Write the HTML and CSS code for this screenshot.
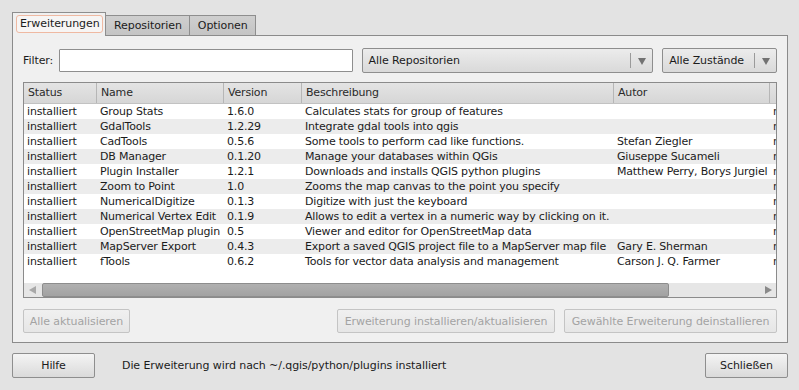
FILE: index.html
```html
<!DOCTYPE html>
<html>
<head>
<meta charset="utf-8">
<link rel="stylesheet" href="styles.css">
</head>
<body>
<div class="dialog">
  <div class="tabbar">
    <div class="tab active"><span class="tab-focus">Erweiterungen</span></div>
    <div class="tab">Repositorien</div>
    <div class="tab">Optionen</div>
  </div>
  <div class="panel">
    <div class="filter-row">
      <label class="filter-label">Filter:</label>
      <div class="input"></div>
      <div class="combo combo-repo"><span class="combo-text">Alle Repositorien</span><span class="combo-sep"></span><span class="combo-arrow"></span></div>
      <div class="combo combo-state"><span class="combo-text">Alle Zustände</span><span class="combo-sep"></span><span class="combo-arrow"></span></div>
    </div>
    <div class="table">
      <div class="thead row">
        <div class="th">Status</div>
        <div class="th">Name</div>
        <div class="th">Version</div>
        <div class="th">Beschreibung</div>
        <div class="th">Autor</div>
        <div class="th last"></div>
      </div>
      <div class="tbody">
        <div class="row"><div class="td">installiert</div><div class="td">Group Stats</div><div class="td">1.6.0</div><div class="td">Calculates stats for group of features</div><div class="td"></div><div class="td last">r</div></div>
        <div class="row alt"><div class="td">installiert</div><div class="td">GdalTools</div><div class="td">1.2.29</div><div class="td">Integrate gdal tools into qgis</div><div class="td"></div><div class="td last">r</div></div>
        <div class="row"><div class="td">installiert</div><div class="td">CadTools</div><div class="td">0.5.6</div><div class="td">Some tools to perform cad like functions.</div><div class="td">Stefan Ziegler</div><div class="td last">r</div></div>
        <div class="row alt"><div class="td">installiert</div><div class="td">DB Manager</div><div class="td">0.1.20</div><div class="td">Manage your databases within QGis</div><div class="td">Giuseppe Sucameli</div><div class="td last">r</div></div>
        <div class="row"><div class="td">installiert</div><div class="td">Plugin Installer</div><div class="td">1.2.1</div><div class="td">Downloads and installs QGIS python plugins</div><div class="td">Matthew Perry, Borys Jurgiel</div><div class="td last">r</div></div>
        <div class="row alt"><div class="td">installiert</div><div class="td">Zoom to Point</div><div class="td">1.0</div><div class="td">Zooms the map canvas to the point you specify</div><div class="td"></div><div class="td last">r</div></div>
        <div class="row"><div class="td">installiert</div><div class="td">NumericalDigitize</div><div class="td">0.1.3</div><div class="td">Digitize with just the keyboard</div><div class="td"></div><div class="td last">r</div></div>
        <div class="row alt"><div class="td">installiert</div><div class="td">Numerical Vertex Edit</div><div class="td">0.1.9</div><div class="td">Allows to edit a vertex in a numeric way by clicking on it.</div><div class="td"></div><div class="td last">r</div></div>
        <div class="row"><div class="td">installiert</div><div class="td">OpenStreetMap plugin</div><div class="td">0.5</div><div class="td">Viewer and editor for OpenStreetMap data</div><div class="td"></div><div class="td last">r</div></div>
        <div class="row alt"><div class="td">installiert</div><div class="td">MapServer Export</div><div class="td">0.4.3</div><div class="td">Export a saved QGIS project file to a MapServer map file</div><div class="td">Gary E. Sherman</div><div class="td last">r</div></div>
        <div class="row"><div class="td">installiert</div><div class="td">fTools</div><div class="td">0.6.2</div><div class="td">Tools for vector data analysis and management</div><div class="td">Carson J. Q. Farmer</div><div class="td last">r</div></div>
      </div>
      <div class="hscroll">
        <span class="sarrow left"></span>
        <div class="strack"><div class="shandle"></div></div>
        <span class="sarrow right"></span>
      </div>
    </div>
    <div class="button-row">
      <div class="btn disabled btn-all">Alle aktualisieren</div>
      <div class="spacer"></div>
      <div class="btn disabled btn-install">Erweiterung installieren/aktualisieren</div>
      <div class="btn disabled btn-remove">Gewählte Erweiterung deinstallieren</div>
    </div>
  </div>
  <div class="footer">
    <div class="btn btn-help">Hilfe</div>
    <div class="footer-text">Die Erweiterung wird nach ~/.qgis/python/plugins installiert</div>
    <div class="btn btn-close">Schließen</div>
  </div>
</div>
</body>
</html>
```

FILE: styles.css
```css
html, body {
  margin: 0;
  padding: 0;
  background: #e3e3e3;
  width: 799px;
  height: 390px;
  overflow: hidden;
}
body {
  font-family: "DejaVu Sans", sans-serif;
  font-size: 11px;
  letter-spacing: -0.08px;
  color: #1b1b1b;
}
.dialog {
  padding: 12px 11px 0 12px;
}
.tabbar {
  display: flex;
  align-items: flex-end;
  height: 23px;
}
.tab {
  height: 20px;
  box-sizing: border-box;
  border: 1px solid #8e8e8e;
  border-bottom: none;
  background: linear-gradient(#cfcfcf, #c4c4c4);
  padding: 0 7px 0 8px;
  line-height: 19px;
  border-left: none;
}
.tab.active {
  height: 24px;
  margin-bottom: -1px;
  background: #f0f0f0;
  border-left: 1px solid #8e8e8e;
  padding: 2px 2px 0 3px;
  position: relative;
  z-index: 1;
}
.tab-focus {
  display: block;
  height: 18px;
  box-sizing: border-box;
  border: 1px solid #efb9a2;
  border-radius: 3px;
  background: #f7f5f4;
  padding: 0 3px;
  line-height: 16px;
  width: 87px;
}
.panel {
  width: 776px;
  height: 308px;
  box-sizing: border-box;
  border: 1px solid #8b8b8b;
  background: #f0f0f0;
  padding: 12px 10px 0 10px;
}
.filter-row {
  display: flex;
  align-items: center;
  height: 25px;
}
.filter-label {
  width: 36px;
}
.input {
  width: 294px;
  height: 23px;
  box-sizing: border-box;
  border: 1px solid #8e8e8e;
  background: #ffffff;
  border-radius: 1px;
  margin-right: 9px;
}
.combo {
  height: 25px;
  box-sizing: border-box;
  border: 1px solid #8e8e8e;
  border-radius: 2px;
  background: linear-gradient(#ececec, #d9d9d9);
  display: flex;
  align-items: center;
  padding-left: 6px;
}
.combo-repo {
  width: 292px;
  margin-right: 9px;
}
.combo-state {
  width: 115px;
}
.combo-text {
  flex: 1;
}
.combo-sep {
  width: 1px;
  height: 15px;
  background: #9a9a9a;
}
.combo-arrow {
  width: 0;
  height: 0;
  border-left: 4px solid transparent;
  border-right: 4px solid transparent;
  border-top: 7px solid #727272;
  margin: 2px 6px 0 7px;
}
.table {
  margin-top: 9px;
  width: 754px;
  height: 216px;
  box-sizing: border-box;
  border: 1px solid #8b8b8b;
  background: #ffffff;
  display: flex;
  flex-direction: column;
  letter-spacing: -0.18px;
}
.row {
  display: grid;
  grid-template-columns: 73px 127px 78px 312px 156px 6px;
  height: 15px;
  line-height: 15px;
  white-space: nowrap;
}
.row.alt {
  background: #ececec;
}
.thead {
  height: 21px;
  line-height: 20px;
  box-sizing: border-box;
  background: linear-gradient(#e4e4e4, #d6d6d6);
  border-bottom: 1px solid #c2c2c2;
  color: #2a2a2a;
}
.th {
  padding-left: 4px;
  border-right: 1px solid #b6b6b6;
  overflow: hidden;
}
.th.last {
  border-right: none;
}
.td {
  padding-left: 3px;
  overflow: hidden;
}
.td.last {
  padding-left: 3px;
  color: #2a2a2a;
}
.tbody {
  height: 179px;
  box-sizing: border-box;
}
.hscroll {
  height: 14px;
  background: #e6e6e6;
  display: flex;
  align-items: center;
}
.sarrow {
  width: 0;
  height: 0;
  border-top: 4px solid transparent;
  border-bottom: 4px solid transparent;
}
.sarrow.left {
  border-right: 7px solid #a8a8a8;
  margin: 0 6px 0 5px;
}
.sarrow.right {
  border-left: 7px solid #8a8a8a;
  margin: 0 4px 0 6px;
}
.strack {
  flex: 1;
  height: 14px;
  display: flex;
}
.shandle {
  width: 627px;
  height: 14px;
  box-sizing: border-box;
  border: 1px solid #8d8d8d;
  border-radius: 2px;
  background: linear-gradient(#b0b0b0, #a2a2a2);
}
.button-row {
  display: flex;
  margin-top: 11px;
  height: 24px;
}
.spacer {
  flex: 1;
}
.btn {
  box-sizing: border-box;
  border: 1px solid #8e8e8e;
  border-radius: 2px;
  background: linear-gradient(#f4f4f4, #dadada);
  display: flex;
  align-items: center;
  justify-content: center;
}
.btn.disabled {
  border-color: #c4c4c4;
  background: linear-gradient(#f0f0f0, #e6e6e6);
  color: #a3a3a3;
}
.btn-all {
  width: 107px;
}
.btn-install {
  width: 218px;
}
.btn-remove {
  width: 213px;
  margin-left: 9px;
}
.footer {
  display: flex;
  align-items: center;
  margin-top: 10px;
  height: 25px;
}
.btn-help {
  width: 83px;
  height: 25px;
}
.btn-close {
  width: 83px;
  height: 25px;
}
.footer-text {
  flex: 1;
  padding-left: 27px;
}
```
